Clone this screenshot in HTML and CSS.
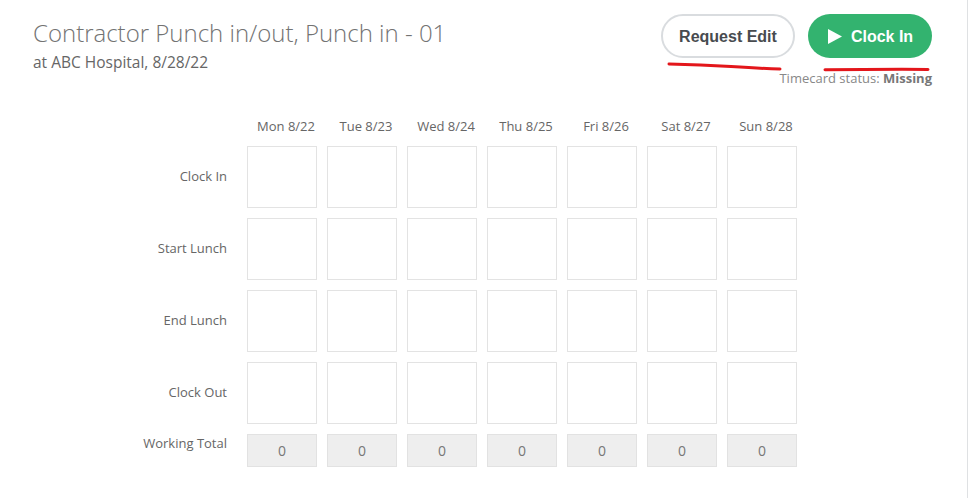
FILE: index.html
```html
<!DOCTYPE html>
<html lang="en">
<head>
  <meta charset="UTF-8" />
  <title>Contractor Punch in/out</title>
  <link rel="stylesheet" href="styles.css">
</head>
<body>
  <div class="page">
    <div class="top">
      <div class="title-block">
        <h1>Contractor Punch in/out, Punch in - 01</h1>
        <p class="sub">at ABC Hospital, 8/28/22</p>
      </div>
      <div class="actions">
        <div class="buttons">
          <button class="btn btn-outline">Request Edit</button>
          <button class="btn btn-green">
            <svg class="play" width="14" height="15" viewBox="0 0 14 15"><polygon points="0,0 14,7.5 0,15" fill="#fff"/></svg>
            Clock In
          </button>
        </div>
        <div class="status">Timecard status: <strong>Missing</strong></div>
        <svg class="marks" width="271" height="60" viewBox="0 0 271 60">
          <path d="M8 50 Q40 50.5 70 52.5 T119 55" stroke="#e3161b" stroke-width="3" fill="none" stroke-linecap="round"/>
          <path d="M164 55.8 Q215 55.2 267 55.4" stroke="#e3161b" stroke-width="3" fill="none" stroke-linecap="round"/>
        </svg>
      </div>
    </div>

    <div class="grid">
      <div></div>
      <div class="day">Mon 8/22</div>
      <div class="day">Tue 8/23</div>
      <div class="day">Wed 8/24</div>
      <div class="day">Thu 8/25</div>
      <div class="day">Fri 8/26</div>
      <div class="day">Sat 8/27</div>
      <div class="day">Sun 8/28</div>

      <div class="label">Clock In</div>
      <div class="cell"></div><div class="cell"></div><div class="cell"></div><div class="cell"></div><div class="cell"></div><div class="cell"></div><div class="cell"></div>

      <div class="label">Start Lunch</div>
      <div class="cell"></div><div class="cell"></div><div class="cell"></div><div class="cell"></div><div class="cell"></div><div class="cell"></div><div class="cell"></div>

      <div class="label">End Lunch</div>
      <div class="cell"></div><div class="cell"></div><div class="cell"></div><div class="cell"></div><div class="cell"></div><div class="cell"></div><div class="cell"></div>

      <div class="label">Clock Out</div>
      <div class="cell"></div><div class="cell"></div><div class="cell"></div><div class="cell"></div><div class="cell"></div><div class="cell"></div><div class="cell"></div>

      <div class="label label-top">Working Total</div>
      <div class="total">0</div><div class="total">0</div><div class="total">0</div><div class="total">0</div><div class="total">0</div><div class="total">0</div><div class="total">0</div>
    </div>
  </div>
</body>
</html>
```

FILE: styles.css
```css
* {
  box-sizing: border-box;
}
body {
  margin: 0;
  background: #fff;
  font-family: 'Open Sans', sans-serif;
  color: #666;
}
.page {
  height: 100vh;
  padding: 14px 35px 0 33px;
  border-right: 1px solid #dfe1e3;
}
.top {
  display: flex;
  justify-content: space-between;
  align-items: flex-start;
}
.title-block {
  padding-top: 3px;
}
h1 {
  margin: 0;
  font-size: 24px;
  font-weight: 300;
  line-height: 32px;
  color: #737373;
}
.sub {
  margin: 2px 0 0;
  font-size: 15.5px;
  line-height: 22px;
  color: #666;
}
.actions {
  position: relative;
  display: flex;
  flex-direction: column;
  align-items: flex-end;
}
.buttons {
  display: flex;
  gap: 13px;
}
.btn {
  height: 44px;
  border-radius: 22px;
  padding-top: 2px;
  font-family: 'Liberation Sans', Arial, sans-serif;
  font-size: 16px;
  font-weight: bold;
  display: flex;
  align-items: center;
  justify-content: center;
  cursor: pointer;
}
.btn-outline {
  width: 134px;
  background: #fff;
  color: #484b4f;
  border: 2px solid #d9dcdf;
}
.btn-green {
  width: 124px;
  background: #33b36f;
  color: #fff;
  border: none;
  gap: 9px;
  padding-left: 7px;
}
.play {
  display: block;
  margin-top: -1px;
}
.status {
  margin-top: 11px;
  font-size: 13px;
  line-height: 18px;
  color: #888;
}
.status strong {
  color: #777;
}
.marks {
  position: absolute;
  left: 0;
  top: 0;
  pointer-events: none;
}
.grid {
  margin-top: 29px;
  display: grid;
  grid-template-columns: 204px repeat(7, 70px);
  grid-template-rows: 20px repeat(4, 62px) 33px;
  column-gap: 10px;
  row-gap: 10px;
}
.day {
  padding-left: 8px;
  font-size: 13px;
  line-height: 20px;
  text-align: center;
  white-space: nowrap;
  color: #666;
}
.label {
  align-self: center;
  text-align: right;
  padding-right: 10px;
  padding-bottom: 2px;
  font-size: 13px;
  line-height: 18px;
  color: #666;
}
.label-top {
  align-self: start;
  padding-bottom: 0;
}
.cell {
  border: 1px solid #e3e3e3;
  background: #fff;
}
.total {
  border: 1px solid #e2e2e2;
  background: #eee;
  display: flex;
  align-items: center;
  justify-content: center;
  font-size: 14px;
  color: #777;
}
```
